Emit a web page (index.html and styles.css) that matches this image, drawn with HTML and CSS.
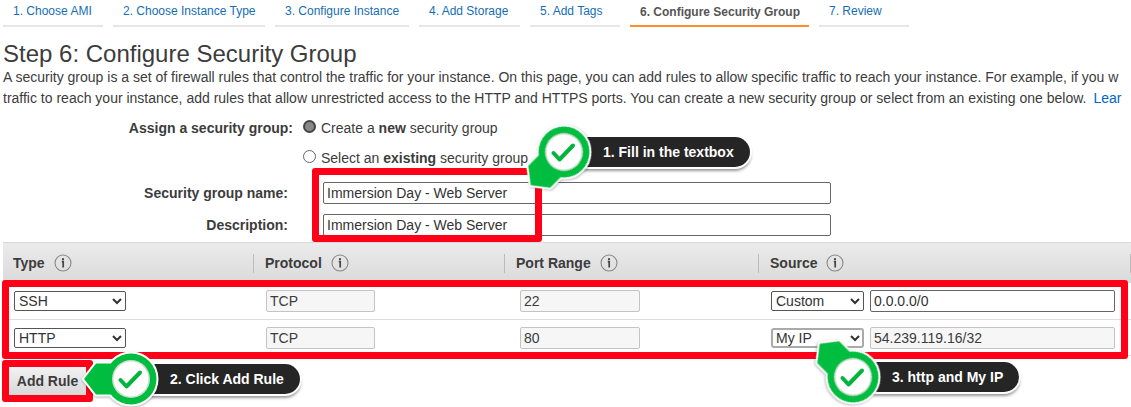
FILE: index.html
```html
<!DOCTYPE html>
<html lang="en">
<head>
<meta charset="utf-8">
<title>Step 6: Configure Security Group</title>
<link rel="stylesheet" href="styles.css">
</head>
<body>
<svg class="defs" aria-hidden="true">
  <symbol id="info" viewBox="0 0 18 18">
    <circle cx="9" cy="9" r="8" fill="none" stroke="#888" stroke-width="1.1"/>
    <circle cx="9" cy="5.200" r="1.1" fill="#444"/>
    <path d="M7.800 7.700H9.200V13.500" fill="none" stroke="#444" stroke-width="1.7"/>
  </symbol>
  <symbol id="chevron" viewBox="0 0 10 8">
    <path d="M1 2L5 6L9 2" fill="none" stroke="#333" stroke-width="2"/>
  </symbol>
  <symbol id="pin" viewBox="-52 -52 104 104">
    <g fill="#fff" stroke="#fff" stroke-width="4" stroke-linejoin="round">
      <circle r="25.500"/><path d="M-47 0L-35 -15.500H-10V15.500H-35Z"/>
    </g>
    <g fill="#00bd3f"><circle r="25.500"/><path d="M-47 0L-35 -15.500H-10V15.500H-35Z"/></g>
    <circle r="19" fill="#c9dccd"/>
    <circle r="17.500" fill="#fff"/>
  </symbol>
  <symbol id="check" viewBox="-52 -52 104 104">
    <path d="M-10.500 1L-4.500 7.500L9 -6.500" fill="none" stroke="#00b53c" stroke-width="4" stroke-linecap="round" stroke-linejoin="round"/>
  </symbol>
</svg>

<main class="page">
  <nav class="steps">
    <a class="step" href="#ami">1. Choose AMI</a>
    <a class="step" href="#type">2. Choose Instance Type</a>
    <a class="step" href="#instance">3. Configure Instance</a>
    <a class="step" href="#storage">4. Add Storage</a>
    <a class="step" href="#tags">5. Add Tags</a>
    <a class="step current" href="#security" aria-current="step">6. Configure Security Group</a>
    <a class="step" href="#review">7. Review</a>
  </nav>

  <h1 class="title">Step 6: Configure Security Group</h1>
  <p class="intro">A security group is a set of firewall rules that control the traffic for your instance. On this page, you can add rules to allow specific traffic to reach your instance. For example, if you w<br>traffic to reach your instance, add rules that allow unrestricted access to the HTTP and HTTPS ports. You can create a new security group or select from an existing one below. <a class="learn" href="#learn">Lear</a></p>

  <section class="group-form">
    <div class="row assign">
      <span class="label" id="assign">Assign a security group:</span>
      <div class="choices" role="radiogroup" aria-labelledby="assign">
        <label class="choice"><input class="radio" type="radio" name="sg" checked><span>Create a <b>new</b> security group</span></label>
        <label class="choice"><input class="radio" type="radio" name="sg"><span>Select an <b>existing</b> security group</span></label>
      </div>
    </div>
    <div class="row">
      <label class="label field" for="name">Security group name:</label>
      <input class="text long" id="name" type="text" value="Immersion Day - Web Server">
    </div>
    <div class="row">
      <label class="label field" for="desc">Description:</label>
      <input class="text long" id="desc" type="text" value="Immersion Day - Web Server">
    </div>
    <div class="mark mark-form"></div>
    <div class="callout callout-form">
      <svg class="pin turn-down"><use href="#pin"/></svg>
      <svg class="pin"><use href="#check"/></svg>
      <span class="pill">1. Fill in the textbox</span>
    </div>
  </section>

  <section class="rules">
    <table class="table">
      <colgroup><col class="c-type"><col class="c-proto"><col class="c-port"><col></colgroup>
      <thead>
        <tr>
          <th><div class="head">Type <svg class="info"><use href="#info"/></svg></div></th>
          <th><div class="head">Protocol <svg class="info"><use href="#info"/></svg></div></th>
          <th><div class="head">Port Range <svg class="info"><use href="#info"/></svg></div></th>
          <th><div class="head">Source <svg class="info"><use href="#info"/></svg></div></th>
        </tr>
      </thead>
      <tbody>
        <tr>
          <td><div class="pick type"><select class="select" aria-label="Type"><option>SSH</option></select><svg class="chevron"><use href="#chevron"/></svg></div></td>
          <td><input class="text proto" type="text" value="TCP" aria-label="Protocol" disabled></td>
          <td><input class="text port" type="text" value="22" aria-label="Port range" disabled></td>
          <td><div class="source"><div class="pick from"><select class="select" aria-label="Source"><option>Custom</option></select><svg class="chevron"><use href="#chevron"/></svg></div><input class="text cidr" type="text" value="0.0.0.0/0" aria-label="Source address"></div></td>
        </tr>
        <tr>
          <td><div class="pick type"><select class="select" aria-label="Type"><option>HTTP</option></select><svg class="chevron"><use href="#chevron"/></svg></div></td>
          <td><input class="text proto" type="text" value="TCP" aria-label="Protocol" disabled></td>
          <td><input class="text port" type="text" value="80" aria-label="Port range" disabled></td>
          <td><div class="source"><div class="pick from"><select class="select active" aria-label="Source"><option>My IP</option></select><svg class="chevron"><use href="#chevron"/></svg></div><input class="text cidr" type="text" value="54.239.119.16/32" aria-label="Source address" disabled></div></td>
        </tr>
      </tbody>
    </table>
    <button class="add" type="button">Add Rule</button>
    <div class="mark mark-rules"></div>
    <div class="mark mark-add"></div>
    <div class="callout callout-add">
      <svg class="pin"><use href="#pin"/></svg>
      <svg class="pin"><use href="#check"/></svg>
      <span class="pill">2. Click Add Rule</span>
    </div>
    <div class="callout callout-source">
      <svg class="pin turn-up"><use href="#pin"/></svg>
      <svg class="pin"><use href="#check"/></svg>
      <span class="pill">3. http and My IP</span>
    </div>
  </section>
</main>
</body>
</html>
```
FILE: styles.css
```css
* { box-sizing: border-box; }
body {
  margin: 0;
  background: #fff;
  color: #3c3c3c;
  font: 14px/20px "Liberation Sans", Arial, sans-serif;
}
.defs { position: absolute; width: 0; height: 0; }
.page {
  min-height: 100vh;
  padding-left: 3px;
  overflow: hidden;
}

.steps {
  display: grid;
  grid-template-columns: 100px 152px 134px 101px 90px 179px 90px;
  column-gap: 10px;
}
.step {
  height: 27px;
  padding-left: 10px;
  border-bottom: 2px solid #e6e6e6;
  color: #146eb4;
  font-size: 12px;
  line-height: 22px;
  text-decoration: none;
  white-space: nowrap;
}
.step.current {
  border-color: #ff8f2b;
  color: #555;
  font-weight: bold;
  line-height: 24px;
}

.title {
  margin: 13px 0 0;
  font-size: 24px;
  font-weight: normal;
  line-height: 27px;
}
.intro {
  margin: 0;
  line-height: 21px;
  white-space: nowrap;
}
.learn {
  margin-left: 3px;
  color: #0066c0;
  text-decoration: none;
}

.group-form {
  position: relative;
  display: flex;
  flex-direction: column;
  gap: 10px;
  padding: 9px 0 6px;
}
.row { display: flex; }
.assign { margin-bottom: 4px; }
.label {
  width: 290px;
  font-weight: bold;
  text-align: right;
}
.label.field {
  width: 285px;
  line-height: 22px;
}
.choices {
  display: flex;
  flex-direction: column;
  gap: 10px;
  margin-left: 10px;
}
.choice { display: flex; gap: 5px; }
.radio {
  appearance: none;
  width: 13px;
  height: 13px;
  margin: 2px 0 0;
  border: 1px solid #666;
  border-radius: 50%;
  background: #fff;
}
.radio:checked {
  border: 2px solid #444;
  background: #888;
}
.text {
  height: 22px;
  padding: 0 3px;
  border: 1px solid #666;
  border-radius: 2px;
  background: #fff;
  color: #333;
  font: inherit;
}
.text:disabled {
  border-color: #c4c4c4;
  background: #f6f6f6;
  color: #3c3c3c;
}
.long { width: 508px; margin-left: 35px; }

.mark {
  position: absolute;
  border: 7px solid #ff0019;
  border-radius: 3px;
  pointer-events: none;
}
.mark-form { left: 309px; top: 59px; width: 230px; height: 74px; }
.mark-rules { left: -1px; top: 38px; right: 3px; height: 79px; }
.mark-add { left: -1px; top: 118px; width: 91px; height: 42px; }

.rules { position: relative; }
.table {
  width: 100%;
  table-layout: fixed;
  border-collapse: separate;
  border-spacing: 0;
}
.c-type { width: 251px; }
.c-proto { width: 251px; }
.c-port { width: 254px; }
th {
  height: 41px;
  padding: 0;
  border-top: 1px solid #d8d8d8;
  background: linear-gradient(#ebebeb, #dadada);
  text-align: left;
}
.head {
  display: flex;
  align-items: center;
  gap: 9px;
  height: 19px;
  padding-left: 11px;
  border-right: 1px solid #bbb;
}
th:first-child .head { padding-left: 10px; }
.info { width: 18px; height: 18px; }
td {
  height: 36px;
  padding: 0 12px;
  border-bottom: 1px solid #ddd;
}
tbody tr:first-child td { height: 37px; }
td:first-child { padding-left: 11px; }
td:nth-child(3) { padding-left: 15px; }
.text, .pick { display: block; }
.pick { position: relative; }
.type { width: 112px; }
.from { width: 93px; }
.proto { width: 109px; }
.port { width: 120px; }
.source { display: flex; align-items: center; gap: 6px; }
.cidr { flex: 1; min-width: 0; margin-right: 4px; }
.select {
  appearance: none;
  display: block;
  width: 100%;
  height: 20px;
  padding: 0 4px;
  border: 1px solid #555;
  border-radius: 2px;
  background: #fff;
  color: #333;
  font: inherit;
  line-height: 18px;
}
.select.active {
  border: 2px solid #aaa;
  border-radius: 3px;
  padding: 0 3px;
  line-height: 16px;
}
.chevron {
  position: absolute;
  right: 4px;
  top: 6px;
  width: 10px;
  height: 8px;
  pointer-events: none;
}
.add {
  display: block;
  width: 77px;
  height: 28px;
  margin: 11px 0 12px 6px;
  padding: 0;
  border: 0;
  background: linear-gradient(#f2f2f2, #d8d8d8);
  color: #3c3c3c;
  font: bold 14px/28px "Liberation Sans", Arial, sans-serif;
}

.callout {
  position: absolute;
  display: flex;
  align-items: center;
  height: 30px;
}
.callout-form { left: 561px; top: 28px; }
.callout-add { left: 128px; top: 122px; }
.callout-source { left: 850px; top: 120px; }
.pin {
  position: absolute;
  left: -52px;
  top: -37px;
  width: 104px;
  height: 104px;
  z-index: 1;
  filter: drop-shadow(0 1px 1px rgba(0, 0, 0, 0.3));
}
.pin + .pin { filter: none; }
.turn-down { transform: rotate(-45deg); }
.turn-up { transform: rotate(45deg); }
.pill {
  padding: 0 16px 0 39px;
  border-radius: 0 15px 15px 0;
  background: #252525;
  box-shadow: 0 0 0 2px #fff, 0 3px 3px 1px rgba(0, 0, 0, 0.4);
  color: #fff;
  font-size: 14px;
  font-weight: bold;
  line-height: 30px;
  white-space: nowrap;
}
```
